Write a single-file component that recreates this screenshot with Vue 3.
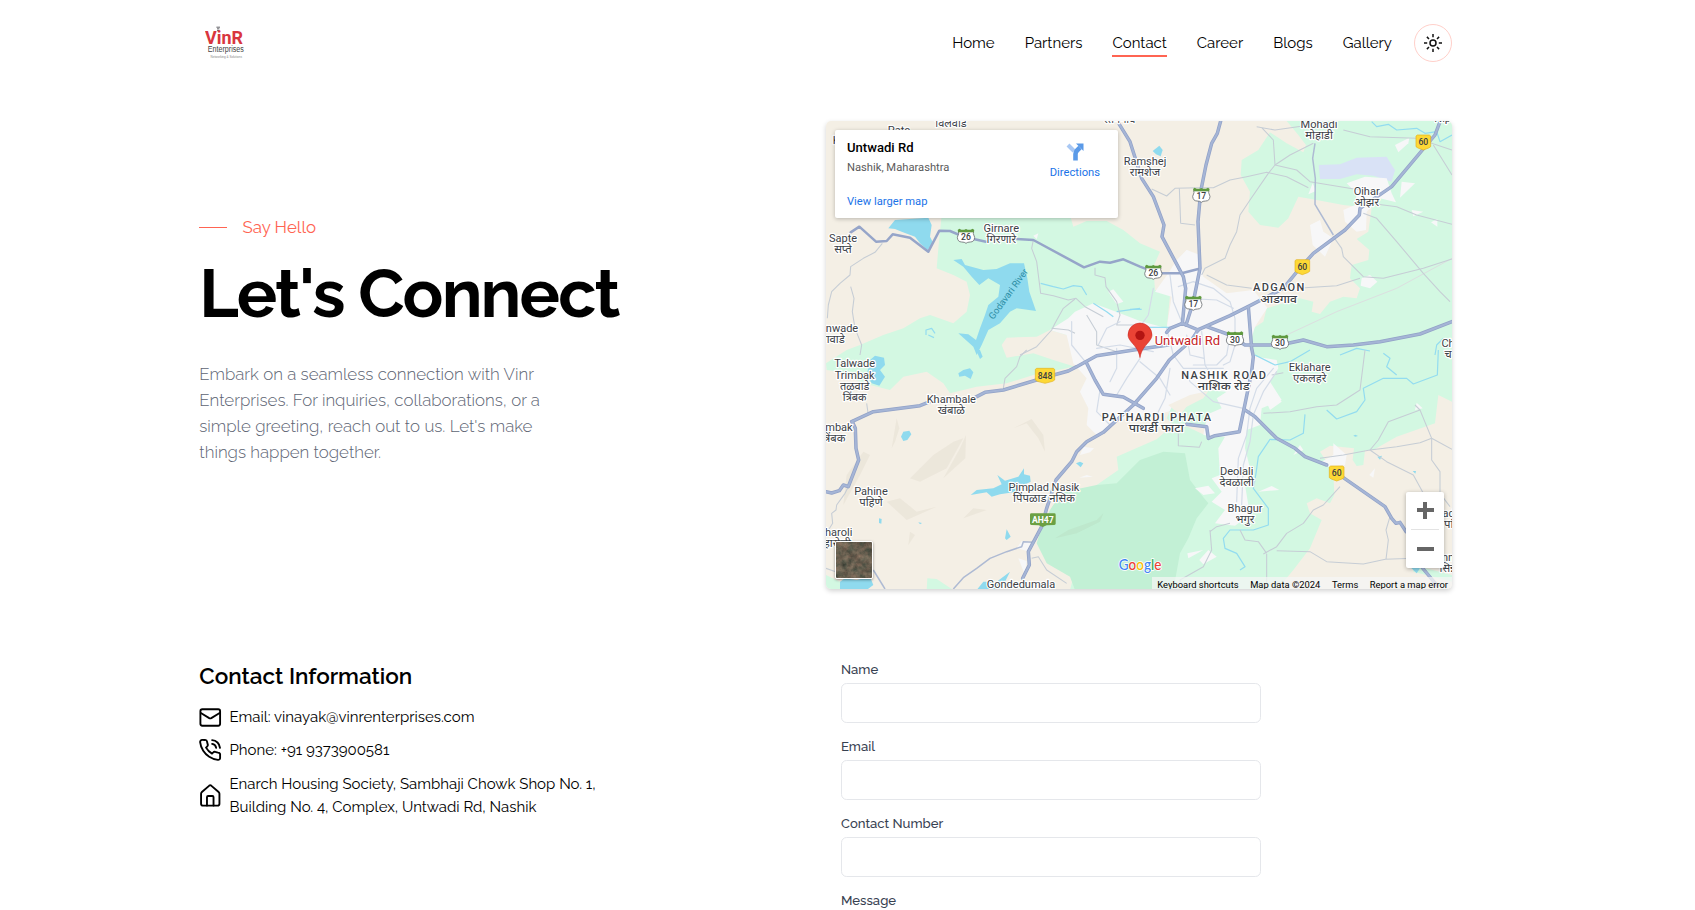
<script setup>
const nav = [
  { text: 'Home' },
  { text: 'Partners' },
  { text: 'Contact', active: true },
  { text: 'Career' },
  { text: 'Blogs' },
  { text: 'Gallery' },
]
const fields = ['Name', 'Email', 'Contact Number']

// Map coordinates are in thirds of a CSS pixel; east tiles are shifted by 930, south tiles by 705.
const tiles = [
  {
    name: 'nw', dx: 0, dy: 0,
    minor: [
      'M187 385 L165 412 L130 430 L92 455 L90 480 L60 505 L35 530 L25 570 L22 610 M92 515 L102 550 L97 590 L105 640 L125 690 L120 720',
      'M640 375 L635 400 L650 440 L655 480 L662 535 L700 542 L745 555 L768 550 L795 575 L850 605',
      'M765 552 L730 580 L705 625 L695 645 L650 695 L600 720 M825 458 L825 480 L855 488 L858 515 L890 560 L900 600 L890 630 L960 630',
      'M695 640 L745 645 L765 655 M800 600 L830 650 L830 690 L890 710',
    ],
    streams: ['M662 505 L700 515 L730 522 L760 512 L785 515 L800 540', 'M820 565 L860 590 L880 605 M890 590 L960 580', 'M318 660 L318 645 L335 640 L345 655 M325 660 L342 668'],
  },
  {
    name: 'ne', dx: 930, dy: 0,
    minor: [
      'M380 35 L435 45 L540 30 M395 38 L430 75 L435 150 L415 175 L360 255 L330 300 L320 350 L300 390 L285 430 L225 460 L215 480',
      'M435 150 L480 120 L550 85 M435 150 L500 165 L540 200 L690 225 M65 222 L110 243 L135 220 L205 218 L250 218 L300 195 L350 185 L410 172 L470 185 L535 218',
      'M148 220 L152 325 L195 330 M720 265 L800 275 L860 300 L966 328',
      'M700 295 L740 310 L800 380 L880 475 L930 530 L960 560 M610 365 L635 400 L640 425 L700 485 L760 490 L880 460 L966 432',
      'M230 480 L290 510 L365 520 M500 520 L620 512 L690 490 M640 45 L720 65 L860 70 L966 105 M910 90 L966 180',
    ],
    medium: ['M555 85 L548 130 L556 190 L555 268 L610 360'],
    rail: ['M470 660 L620 590 L800 520 L966 430'],
    streams: ['M725 20 L740 35 L775 28 L800 45 L860 40 L885 55 L920 50 L930 80 L966 60', 'M0 583 L35 583', 'M55 637 L120 637', 'M630 720 L680 700 L720 708 M915 720 L920 690 L940 670'],
  },
  {
    name: 'sw', dx: 0, dy: 705,
    minor: [
      'M85 410 L75 430 L50 465 L48 480 L35 490 L38 520 L22 545',
      'M18 655 L60 670 M550 115 L555 85 L590 50 L600 20 L620 0 M635 625 L655 620 L680 660 L740 700 M140 160 L145 195',
    ],
    medium: ['M400 717 L430 683 L470 655 L510 625 L560 605 L605 590 L610 575 L640 577', 'M160 660 L195 717'],
    streams: [],
  },
  {
    name: 'se', dx: 930, dy: 705,
    minor: [
      'M400 190 L480 185 L560 170 L620 165 L690 120 L705 0 M720 300 L745 270 L775 215 L870 180 L855 165 M870 180 L905 265 L966 298 M905 265 L905 330 L930 365 L930 430 L960 470',
      'M570 325 L640 315 L720 300 L800 290 L870 278 L905 265 M720 300 L770 335 L850 375 L880 430 M630 410 L580 465 L550 480 L520 520 L470 550 L440 590 L400 612',
      'M440 602 L540 605 L590 635 L700 642 L766 628 L850 625 M780 500 L768 540 L775 570 L768 628 M410 612 L410 720 M240 540 L245 600 L220 650 L150 690 L150 720',
      'M300 520 L260 530 L240 545 M330 540 L345 570 L385 575 L410 610 M145 250 L145 287 L208 292 L215 275 M425 75 L460 68',
    ],
    streams: ['M375 15 L435 45 L480 35 L540 0', 'M590 180 L620 207 L680 185 L705 150 L700 115 L760 85 L830 85 L850 102 L922 75 L925 0 M760 10 L780 25 L770 50 L800 75', 'M525 193 L520 250 L480 270 L420 268 L385 320 L378 370 L370 415 L415 475 L415 525 L370 540 L300 540 L280 565 L285 595 L320 610 L345 650 L330 660'],
  },
]

const stateRoad = 'M92 352 L118 335 L168 380 L200 378 L218 358 L270 368 L325 410 L358 347 L390 348 L430 365 L498 380 M590 372 L640 375 L792 457 L840 440 L870 443 L910 433 L960 455 L1000 470 M1018 475 L1085 475 L1135 462'

const highways = [
  'M898 28 L930 80 L965 190 L1000 245 L1032 330 L1026 365 L1090 485 L1097 520 L1087 628',
  'M1202 18 L1192 55 L1175 85 L1158 150 L1142 230 L1134 320 L1140 460 L1120 560 L1098 630',
  'M95 920 L160 890 L300 872 L330 860 M460 850 L495 832 L550 825 L690 783 L745 768 L770 755 L830 722 L960 702 L1045 690',
  'M97 920 L106 940 L108 1000 L116 1035 L85 1115 L70 1110 L58 1127 L35 1134 L18 1130',
  'M1860 20 L1845 60 L1715 215 L1620 280 L1618 300 L1575 345 L1480 415 L1435 465 L1390 520 L1290 572 L1230 602 L1135 644',
  'M1135 644 L1115 675 L1048 735 L1010 790 L940 870 L850 952 L800 980 L770 1010 L755 1040 L708 1095 L680 1180 L665 1235 L625 1310 L628 1350 L608 1390',
  'M1285 575 L1295 700 L1300 725 L1295 770 L1258 950 L1185 962 L1165 970 L1160 935 L1100 928 M800 745 L825 795 L850 838 L910 846 L970 880',
  'M1275 885 L1305 905 L1370 970 L1425 1000 L1455 1025 L1520 1050 M1570 1088 L1695 1175 L1715 1210 L1728 1225 L1740 1222 L1758 1250 M1800 1350 L1850 1410',
  'M1040 652 L1050 640 L1087 625 L1135 645 M1160 635 L1230 660 L1275 690 L1380 690 L1450 675 L1520 695 L1600 690 L1680 680 L1800 657 L1896 620',
]

const cityStreets = [
  'M1075 515 L1120 500 L1180 520 L1230 560 L1245 610 L1245 680 M1100 550 L1190 555 L1240 580 M755 620 L755 690 L800 745',
  'M1040 640 L1060 720 L1090 760 L1210 760 M900 620 L860 640 L835 690 M960 730 L920 790 L890 840 M960 740 L1020 790 L1050 840',
  'M1145 650 L1155 750 L1185 800 M1100 660 L1110 720 L1152 730 M1230 660 L1220 720 L1190 750 L1120 750',
  'M1050 760 L1035 850 L1000 920 M1245 690 L1230 740 L1210 750 M830 700 L900 690 L1000 710 M840 825 L830 890 L870 930',
  'M1100 770 L1110 800 L1180 860 L1270 880 M1000 520 L985 600 L960 635 M1050 480 L1060 560 L1085 620 M890 700 L890 760 L870 800',
  'M1360 760 L1310 820 L1290 880 L1280 960 L1255 1030 L1250 1160 M1370 770 L1330 830 L1300 900 L1290 980 L1270 1050 L1265 1170',
]

const ponds = [
  'M205 340 L225 315 L325 308 L335 330 L330 365 L340 385 L322 405 L300 385 L285 365 L245 350 L225 342Z',
  'M400 435 L425 432 L435 450 L490 465 L530 462 L570 445 L612 445 L622 490 L628 530 L648 588 L590 580 L570 590 L540 625 L505 645 L485 690 L470 720 L460 695 L415 655 L445 658 L468 675 L480 640 L495 600 L505 570 L535 545 L540 510 L505 490 L478 510 L455 485 L430 455Z',
  'M150 735 L165 722 L192 728 L195 750 L180 765 L195 785 L178 812 L155 805 L140 780Z',
  'M415 775 L430 765 L450 760 L460 772 L452 792 L435 782 L418 785Z', 'M468 705 L480 705 L488 725 L480 732Z',
  'M243 965 L250 950 L268 947 L274 958 L262 975 L250 978Z',
  'M452 1140 L470 1125 L520 1120 L545 1108 L532 1080 L555 1097 L595 1085 L612 1060 L612 1078 L630 1082 L632 1100 L600 1115 L590 1130 L540 1138 L515 1145 L500 1132Z',
  'M768 1045 L780 1040 L790 1045 L782 1057Z', 'M555 1270 L560 1243 L572 1265 L560 1275Z', 'M177 1210 L185 1212 L184 1226 L177 1224Z', 'M295 1222 L306 1224 L300 1228Z',
  'M60 1400 L75 1390 L110 1395 L150 1385 L160 1410 L140 1425 L60 1425Z', 'M470 1425 L490 1400 L530 1400 L570 1370 L555 1400 L520 1425Z',
  'M998 108 L1018 92 L1028 105 L1022 124 L1008 118Z', 'M1770 1355 L1800 1360 L1790 1375Z', 'M1672 1025 L1686 1022 L1680 1034Z', 'M1778 1068 L1788 1068 L1786 1076Z', 'M1600 962 L1606 959 L1614 963 L1606 965Z',
]

const suburbs = [
  'M640 362 L655 355 L650 373Z', 'M865 530 L880 523 L910 560 L890 568Z', 'M1725 90 L1768 68 L1765 85 L1735 112Z',
  'M1580 205 L1635 185 L1700 190 L1715 235 L1728 262 L1680 250 L1640 290 L1638 345 L1610 350 L1575 320 L1570 285 L1605 270 L1610 235Z',
  'M1745 200 L1785 205 L1740 248Z', 'M1470 330 L1500 315 L1510 350 L1540 370 L1515 425 L1478 390Z', 'M1465 238 L1478 205 L1488 228Z',
  'M1775 285 L1810 290 L1780 304Z', 'M1833 322 L1852 312 L1852 335Z', 'M1625 490 L1650 480 L1672 500 L1650 520 L1622 512Z',
  'M1505 1040 L1540 1020 L1540 985 L1580 1020 L1575 1050 L1520 1055Z', 'M1315 1130 L1355 1113 L1378 1125Z', 'M1102 1315 L1150 1305 L1105 1330Z',
  'M1138 1335 L1165 1305 L1190 1325 L1150 1348Z', 'M1420 1020 L1440 990 L1450 1005Z', 'M1785 885 L1790 863 L1808 880Z', 'M1648 1080 L1665 1060 L1660 1088Z',
  'M780 1020 L790 995 L822 1000 L810 1012Z', 'M595 1330 L620 1338 L615 1380Z', 'M590 1300 L605 1278 L640 1282 L630 1310Z', 'M778 1088 L800 1080 L818 1085Z', 'M1080 430 L1100 405 L1130 420 L1140 455 L1100 460Z',
  'M1330 840 L1360 825 L1385 860 L1350 885Z', 'M1125 1120 L1165 1112 L1185 1135 L1150 1140Z',
]

const relief = [
  'M80 1080 L130 1010 L150 1020 L120 1080 L70 1170Z', 'M215 1000 L230 910 L238 940 L225 980Z', 'M270 1090 L340 1020 L400 980 L430 970 L380 1060 L300 1100Z',
  'M420 1000 L438 960 L436 1030 L370 1090Z', 'M580 940 L635 912 L670 960 L675 1010 L655 970 L620 925Z', 'M200 1160 L240 1150 L290 1190 L350 1175 L260 1215Z',
  'M705 1270 L745 1245 L830 1215 L850 1195 L840 1220 L770 1255Z', 'M265 1290 L270 1250 L285 1260Z', 'M430 1210 L460 1180 L500 1185Z',
]

const labels = [
  { cx: 69, y: 381, a: 'Sapte', b: 'सप्ते' },
  { cx: 544, y: 350, a: 'Girnare', b: 'गिरणारे' },
  { cx: 66, y: 651, a: 'nwade', b: 'गवाडे', bx: 42 },
  { cx: 975, y: 150, a: 'Ramshej', b: 'रामशेज' },
  { cx: 1497, y: 40, a: 'Mohadi', b: 'मोहाडी' },
  { cx: 1640, y: 240, a: 'Ojhar', b: 'ओझर' },
  { cx: 394, y: 864, a: 'Khambale', b: 'खंबाळे' },
  { cx: 57, y: 948, a: 'mbak', b: 'त्रिंबक', bx: 40 },
  { cx: 153, y: 1139, a: 'Pahine', b: 'पहिणे' },
  { cx: 56, y: 1263, a: 'haroli', b: 'हारोली', bx: 52 },
  { cx: 672, y: 1128, a: 'Pimplad Nasik', b: 'पिंपळाड नसिक' },
  { cx: 603, y: 1418, a: 'Gondedumala' },
  { cx: 1469, y: 768, a: 'Eklahare', b: 'एकलहरे' },
  { cx: 1250, y: 1080, a: 'Deolali', b: 'देवळाली' },
  { cx: 1275, y: 1190, a: 'Bhagur', b: 'भगुर' },
  { cx: 1884, y: 697, a: 'Ch', b: 'च' },
  { cx: 1886, y: 1206, a: 'ad', b: 'पां' },
  { cx: 1884, y: 1338, a: 'nn', b: 'सिन्न' },
]
const towns = [
  { cx: 1376, y: 529, a: 'ADGAON', b: 'आडगाव', w: 154, bw: 110 },
  { cx: 1211, y: 792, a: 'NASHIK ROAD', b: 'नाशिक रोड', w: 254, bw: 156 },
  { cx: 1009, y: 917, a: 'PATHARDI PHATA', b: 'पाथर्डी फाटा', w: 328, bw: 166 },
]
const stateShields = [
  { x: 438, y: 364, n: 26 }, { x: 1144, y: 241, n: 17 }, { x: 1000, y: 472, n: 26 },
  { x: 1120, y: 565, n: 17 }, { x: 1245, y: 672, n: 30 }, { x: 1380, y: 682, n: 30 },
]
const nationalShields = [
  { x: 1810, y: 82, n: 60, w: 44 }, { x: 1447, y: 456, n: 60, w: 44 }, { x: 1550, y: 1075, n: 60, w: 44 }, { x: 675, y: 782, n: 848, w: 58 },
]
</script>

<template>
  <div class="page">
    <header class="header">
      <svg class="logo" width="46" height="40" viewBox="0 0 46 40">
        <path d="M12 4.400h2.400M11.400 1.200h3.600M12 2.800h2.400" stroke="#55555a" stroke-width=".9" />
        <text class="logo-mark" x="0" y="17.600" font-size="17.500" textLength="38" lengthAdjust="spacingAndGlyphs">VinR</text>
        <text class="logo-sub" x="2.800" y="26" font-size="8.300" textLength="36" lengthAdjust="spacingAndGlyphs">Enterprises</text>
        <text class="logo-tag" x="5.500" y="32.200" font-size="3.600" textLength="31.500" lengthAdjust="spacingAndGlyphs">Networking &amp; Solutions</text>
      </svg>
      <nav class="nav">
        <a v-for="n in nav" :key="n.text" :class="{ active: n.active }">{{ n.text }}</a>
        <button class="theme" aria-label="Theme">
          <svg width="20" height="20" viewBox="0 0 20 20" fill="none" stroke="#111" stroke-width="1.500">
            <circle cx="10" cy="10" r="3" />
            <path d="M10 1v3.200M10 15.800V19M1 10h3.200M15.800 10H19M3.900 3.900l2.100 2.100M14 14l2.100 2.100M3.900 16.100L6 14M14 6l2.100-2.100" />
          </svg>
        </button>
      </nav>
    </header>

    <section class="hero">
      <div class="intro">
        <p class="eyebrow"><span class="dash"></span>Say Hello</p>
        <h1>Let's Connect</h1>
        <p class="lead">Embark on a seamless connection with Vinr<br />Enterprises. For inquiries, collaborations, or a<br />simple greeting, reach out to us. Let's make<br />things happen together.</p>
      </div>

      <div class="map">
        <svg class="canvas" width="626" height="468" viewBox="18 18 1878 1404">
          <rect x="18" y="18" width="1878" height="1407" fill="#f4efe5" />
          <g fill="#d3f8e2">
            <path d="M365 300 L750 300 760 335 800 318 860 318 910 345 960 385 1020 410 1000 455 1005 525 1050 540 1040 645 1000 700 740 760 700 768 640 780 560 805 470 815 390 835 370 805 320 770 250 785 210 825 130 805 60 770 20 765 18 745 80 705 120 690 190 660 250 640 300 610 330 600 400 625 440 590 450 540 440 500 400 480 350 460 355 400Z" />
            <path d="M1400 18 L1435 60 1458 90 1450 112 1400 85 1350 52 1315 105 1265 135 1262 180 1290 230 1285 290 1320 330 1375 338 1405 310 1435 245 1490 255 1570 270 1655 280 1645 350 1610 372 1648 405 1645 435 1595 450 1590 490 1620 520 1610 550 1570 545 1530 560 1500 597 1475 590 1480 560 1440 550 1340 580 1330 620 1300 640 1275 805 1260 950 1165 965 1070 920 1010 973 890 1025 895 1065 830 1110 750 1425 1370 1425 1420 1365 1470 1300 1505 1215 1470 1195 1460 1165 1490 1150 1530 1165 1543 1140 1540 1070 1500 1010 1530 992 1602 1000 1598 1035 1610 1053 1630 1050 1635 1005 1660 1005 1730 965 1845 925 1855 840 1896 860 1896 18Z" />
            <path d="M320 1425 L322 1390 350 1392 400 1425Z M18 1380 L60 1400 60 1425 18 1425Z" />
            <path d="M1780 1350 L1896 1380 1896 1400 1780 1370Z" />
          </g>
          <path fill="#f4efe5" d="M545 690 L560 668 650 665 690 645 740 660 780 720 765 755 700 735 640 715 560 728Z" />
          <path fill="#c2f0d5" d="M830 1110 L890 1105 960 1035 1030 1010 1095 1015 1110 1095 1140 1135 1165 1165 1130 1210 1105 1270 1080 1315 1060 1425 765 1425 750 1385 680 1345 650 1285 665 1235 690 1185 725 1132Z" />
          <path fill="#d9e2f6" d="M1496 150 L1560 148 1610 128 1700 125 1715 150 1725 165 1715 200 1660 182 1610 178 1560 192 1500 192Z" />
          <path class="urban" d="M745 610 L765 590 820 565 900 595 960 618 1040 640 1055 545 1005 530 1045 475 1070 435 1100 405 1140 420 1150 485 1220 535 1300 525 1342 578 1305 635 1285 700 1310 725 1370 735 1375 760 1350 800 1385 855 1325 880 1320 930 1280 945 1275 1000 1290 1060 1275 1110 1290 1200 1245 1232 1185 1225 1215 1185 1175 1160 1205 1130 1175 1090 1200 1080 1195 1000 1215 965 1150 960 1165 870 1110 850 1060 885 1010 900 930 905 880 925 830 960 800 930 805 880 780 830 800 790 760 745 740 660 690 645Z" />
          <path fill="#d3f8e2" d="M1060 865 L1110 850 1160 825 1220 830 1190 850 1205 880 1170 895 1155 930 1060 930 1040 910Z" />
          <path fill="#f4efe5" d="M1045 870 L1110 840 1165 828 1150 850 1100 875 1080 900Z" />
          <path v-for="d in suburbs" :key="d" class="urban" :d="d" />
          <path v-for="d in relief" :key="d" class="relief" :d="d" />
          <path v-for="d in ponds" :key="d" fill="#8fdaee" :d="d" />
          <g v-for="t in tiles" :key="t.name" :transform="`translate(${t.dx} ${t.dy})`" fill="none" stroke-linejoin="round">
            <path v-for="d in t.streams" :key="d" :d="d" stroke="#93dcf0" stroke-width="3.600" />
            <path v-for="d in t.rail || []" :key="d" :d="d" stroke="#dcdfe0" stroke-width="3" />
            <path v-for="d in t.minor" :key="d" :d="d" stroke="#c6cdd5" stroke-width="3.200" />
            <path v-for="d in t.medium || []" :key="d" :d="d" stroke="#aebad3" stroke-width="4.500" />
          </g>
          <g fill="none" stroke-linejoin="round" stroke-linecap="round">
            <path v-for="d in cityStreets" :key="d" :d="d" stroke="#d4dce8" stroke-width="3.600" />
            <path :d="stateRoad" stroke="#96a5c9" stroke-width="7.500" />
            <path v-for="d in highways" :key="d" :d="d" stroke="#92a2c7" stroke-width="10.500" />
            <path v-for="d in highways" :key="d" :d="d" stroke="#a5b5d6" stroke-width="6" />
          </g>

          <g v-for="s in stateShields" :key="`${s.x}`" :transform="`translate(${s.x} ${s.y})`">
            <path d="M-23 -14 H23 L22 -8 L26 3 Q25 17 13 17 Q4 17 0 21 Q-4 17 -13 17 Q-25 17 -26 3 L-22 -8Z" fill="#fff" stroke="#707579" stroke-width="2.600" />
            <path d="M-25 -19 L-20 -23 L-14 -20 H-5 L0 -22 L5 -20 H14 L20 -23 L25 -19 L23 -12 H-23Z" fill="#5f9a3f" />
            <text class="shield" y="11">{{ s.n }}</text>
          </g>
          <g v-for="s in nationalShields" :key="`${s.x}`" :transform="`translate(${s.x} ${s.y})`">
            <path :d="`M${-s.w / 2} -19 L${-s.w / 2 + 4} -22 H${s.w / 2 - 4} L${s.w / 2} -19 V13 L${s.w / 2 - 6} 17 L0 23 L${-s.w / 2 + 6} 17 L${-s.w / 2} 13Z`" fill="#fdd835" stroke="#e2b21c" stroke-width="2" />
            <text class="shield" y="9">{{ s.n }}</text>
          </g>
          <path d="M630 1199 Q630 1195 634 1195 H703 Q707 1195 707 1199 V1226 Q707 1229 703 1230 L680 1231 L668 1236 L656 1231 L634 1230 Q630 1229 630 1226Z" fill="#6ba043" />
          <text class="shield ah" x="668.500" y="1224">AH47</text>

          <g class="label">
            <text x="237" y="56">Pate</text>
            <text x="58" y="87">Kh</text>
            <text x="393" y="37">विलवाडे</text>
            <text x="898" y="25">रतनगाव</text>
            <text x="1868" y="22">Nip</text>
            <text x="104" y="757">Talwade</text>
            <text x="104" y="791">Trimbak</text>
            <text x="104" y="824">तळवाडे</text>
            <text x="104" y="857">त्रिंबक</text>
            <template v-for="l in labels" :key="l.a">
              <text :x="l.cx" :y="l.y">{{ l.a }}</text>
              <text v-if="l.b" :x="l.bx || l.cx" :y="l.y + 33" class="local">{{ l.b }}</text>
            </template>
          </g>
          <g class="label town">
            <template v-for="l in towns" :key="l.a">
              <text :x="l.cx" :y="l.y" :textLength="l.w">{{ l.a }}</text>
              <text :x="l.cx" :y="l.y + 34" :textLength="l.bw" lengthAdjust="spacingAndGlyphs" class="local">{{ l.b }}</text>
            </template>
          </g>
          <text class="river" transform="translate(520 615) rotate(-54)">Godavari River</text>
          <text class="place" x="1004" y="691" textLength="196">Untwadi Rd</text>
          <path d="M960 728 C956 705 946 695 934 681 C927 672 924 666 924 660 A36 36 0 0 1 996 660 C996 666 993 672 986 681 C974 695 964 705 960 728Z" fill="#ea4335" stroke="#c5221f" stroke-width="1.500" />
          <circle cx="960" cy="661" r="14" fill="#b31412" />
          <text class="google" x="896" y="1366" textLength="128" lengthAdjust="spacingAndGlyphs"><tspan fill="#4285f4">G</tspan><tspan fill="#ea4335">o</tspan><tspan fill="#fbbc04">o</tspan><tspan fill="#4285f4">g</tspan><tspan fill="#34a853">l</tspan><tspan fill="#ea4335">e</tspan></text>
        </svg>

        <div class="card">
          <div class="place-info">
            <strong>Untwadi Rd</strong>
            <span class="address">Nashik, Maharashtra</span>
            <a>View larger map</a>
          </div>
          <div class="directions">
            <svg width="18" height="18" viewBox="0 0 18 18">
              <path d="M2 2l6 6" stroke="#a9c8f4" stroke-width="4" />
              <path d="M9.500 17.500V11q0-2 1.500-3.500L14 4.500" fill="none" stroke="#5a9ae8" stroke-width="4.600" />
              <path d="M10 .5H17.500V8Z" fill="#5a9ae8" />
            </svg>
            <a>Directions</a>
          </div>
        </div>

        <div class="satellite">
          <svg width="36" height="36">
            <filter id="terrain" x="0" y="0" width="100%" height="100%" color-interpolation-filters="sRGB">
              <feTurbulence type="fractalNoise" baseFrequency="0.16" numOctaves="4" seed="8" />
              <feColorMatrix values="0.42 0.05 0 0 0.17  0.26 0.12 0 0 0.18  0.22 0.1 0 0 0.15  0 0 0 0 1" />
            </filter>
            <rect width="36" height="36" filter="url(#terrain)" />
          </svg>
        </div>

        <div class="zoom">
          <span class="sign plus"></span>
          <i></i>
          <span class="sign"></span>
        </div>

        <div class="legal"><span>Keyboard shortcuts</span><span>Map data ©2024</span><span>Terms</span><span>Report a map error</span></div>
      </div>
    </section>

    <section class="contact">
      <div class="info">
        <h2>Contact Information</h2>
        <ul>
          <li>
            <svg class="icon" viewBox="0 0 24 24"><rect x="1.500" y="3.500" width="21" height="17.500" rx="2" /><path d="M2 7.500l8.900 5.400q1.100.6 2.200 0L22 7.500" /></svg>
            <span>Email: vinayak@vinrenterprises.com</span>
          </li>
          <li class="phone">
            <svg class="icon" viewBox="0 0 24 24"><path d="M14 5.200a5 5 0 0 1 4.300 4.300M14 1.200a9 9 0 0 1 8.400 8.200" /><path d="M22.500 17v3.200a2.100 2.100 0 0 1-2.300 2.100 21.500 21.500 0 0 1-9.300-3.300 21 21 0 0 1-6.400-6.400A21.500 21.500 0 0 1 1.200 3.300 2.100 2.100 0 0 1 3.300 1H6.500a2.100 2.100 0 0 1 2.100 1.800c.1 1 .4 2 .7 2.900a2.100 2.100 0 0 1-.5 2.200L7.500 9.200a17 17 0 0 0 6.400 6.400l1.300-1.300a2.100 2.100 0 0 1 2.300-.5c.9.3 1.900.6 2.900.7a2.100 2.100 0 0 1 2.100 2.500z" /></svg>
            <span>Phone: +91 9373900581</span>
          </li>
          <li>
            <svg class="icon" viewBox="0 0 24 24"><path d="M2.200 10.500q0-1.200.9-2L11 1.700q1-.8 2 0l7.900 6.800q.9.800.9 2V21q0 2-2 2H4.200q-2 0-2-2z" /><path d="M8.500 23v-9q0-1.200 1.200-1.200h4.600q1.200 0 1.200 1.200v9" /></svg>
            <span>Enarch Housing Society, Sambhaji Chowk Shop No. 1,<br />Building No. 4, Complex, Untwadi Rd, Nashik</span>
          </li>
        </ul>
      </div>
      <form class="form">
        <label v-for="f in fields" :key="f">{{ f }}<input type="text" /></label>
        <label>Message<textarea></textarea></label>
      </form>
    </section>
  </div>
</template>

<style>
html, body { margin: 0; background: #fff; }
</style>

<style scoped>
* { box-sizing: border-box; }
.page { height: 910px; overflow: hidden; padding: 0 243px 0 199.300px; background: #fff; color: #000; font-family: Raleway, Lato, sans-serif; font-size: 15px; line-height: 22.500px; }
.header { height: 87px; display: flex; justify-content: space-between; align-items: center; }
.logo { margin-left: 5.700px; margin-top: 4px; }
.logo-mark { font-family: Roboto, sans-serif; font-weight: 700; fill: #d9363e; }
.logo-sub { font-family: "Liberation Sans", sans-serif; fill: #444; }
.logo-tag { font-family: "Liberation Sans", sans-serif; fill: #888; }
.nav { display: flex; align-items: center; gap: 30px; }
.nav a { height: 26px; margin-top: 1px; padding-top: 1px; border-bottom: 2px solid transparent; color: #000; }
.nav a.active { border-color: #ff6452; }
.theme { width: 38px; height: 38px; margin: 0 0 1px -8px; padding: 0; display: grid; place-items: center; border: 1px solid #ffd0ca; border-radius: 50%; background: #fff; }
.hero { display: flex; justify-content: space-between; padding-top: 34px; }
.intro { padding-top: 93px; }
.intro p, .intro h1, .info h2 { margin: 0; }
.eyebrow { display: flex; align-items: center; gap: 15.200px; color: #ff6452; font-size: 16.875px; line-height: 26.250px; }
.dash { width: 28px; height: 1px; background: #ff6452; }
.intro h1 { margin-top: 20px; font-size: 67.500px; line-height: 67.500px; font-weight: 700; letter-spacing: -0.027em; white-space: nowrap; }
.lead { padding-top: 33px; color: #5d6473; font-size: 16.875px; line-height: 26.100px; font-weight: 300; white-space: nowrap; }
.map { position: relative; width: 626px; height: 468px; overflow: hidden; border-radius: 5px; font-family: Roboto, "Noto Sans", sans-serif; }
.hero .map { box-shadow: 0 2px 5px rgba(0, 0, 0, .18); }
.canvas { display: block; }
.urban { fill: #f7f7f8; }
.relief { fill: #8d8468; opacity: .07; }
.label text { font-family: Roboto, "Noto Sans Devanagari", sans-serif; font-size: 33px; fill: #3c4146; stroke: #fff; stroke-width: 7px; paint-order: stroke; stroke-linejoin: round; text-anchor: middle; }
.label .local { font-size: 34px; }
.town text { font-weight: 500; }
.shield { font-family: Roboto, sans-serif; font-size: 26px; font-weight: 500; fill: #3c4043; text-anchor: middle; }
.ah { fill: #fff; font-weight: 700; }
.river { font-family: Roboto, sans-serif; font-size: 28px; fill: #2e8fa6; }
.place { font-family: Roboto, sans-serif; font-size: 39px; fill: #c5221f; stroke: #fff; stroke-width: 7px; paint-order: stroke; }
.google { font-family: Lato, sans-serif; font-size: 46px; font-weight: 500; stroke: #fff; stroke-width: 5px; paint-order: stroke; }
.card { position: absolute; left: 9px; top: 9px; width: 283px; height: 88px; padding: 9px 18px 9px 12px; display: flex; justify-content: space-between; background: #fff; border-radius: 2px; box-shadow: 0 1px 4px rgba(0, 0, 0, .25); }
.card a { color: #1a73e8; font-size: 11.200px; line-height: 14px; }
.place-info { display: flex; flex-direction: column; }
.place-info strong { font-size: 13.100px; line-height: 18px; font-weight: 500; }
.address { margin-top: 3px; color: #5b5b5b; font-size: 11.200px; line-height: 15px; }
.place-info a { margin-top: 20px; }
.directions { display: flex; flex-direction: column; align-items: center; padding-top: 4px; }
.directions a { margin-top: 5px; }
.satellite { position: absolute; left: 9px; bottom: 10px; width: 38px; height: 38px; border: 1px solid #fff; border-radius: 2px; overflow: hidden; box-shadow: 0 1px 3px rgba(0, 0, 0, .4); }
.satellite svg { display: block; }
.zoom { position: absolute; left: 580px; top: 371px; width: 38px; height: 76px; display: flex; flex-direction: column; align-items: center; background: #fff; border-radius: 2px; box-shadow: 0 1px 4px rgba(0, 0, 0, .3); }
.zoom i { width: 28px; height: 1px; background: #e3e3e3; }
.sign { flex: 1; width: 17px; background: linear-gradient(#666, #666) center / 17px 4px no-repeat; }
.plus { margin-top: -1px; background: linear-gradient(#666, #666) center / 17px 4px no-repeat, linear-gradient(#666, #666) center / 4px 17px no-repeat; }
.legal { position: absolute; right: 0; bottom: 0; height: 12px; display: flex; gap: 11.500px; padding: 0 4px 0 5px; background: rgba(245, 245, 245, .72); color: #000; font-size: 9.400px; line-height: 15px; white-space: nowrap; }
.contact { display: flex; padding-top: 71px; }
.info { width: 641.700px; flex: none; }
.info h2 { padding-top: 1px; font-size: 22.500px; line-height: 30px; font-weight: 600; }
.info ul { list-style: none; margin: 15px 0 0; padding: 0; display: flex; flex-direction: column; gap: 11px; }
.info li { display: flex; align-items: center; gap: 7.700px; }
.info .phone { margin: -1px 0 1px; }
.icon { width: 22.500px; height: 22.500px; fill: none; stroke: #000; stroke-width: 2; stroke-linecap: round; stroke-linejoin: round; }
.form { width: 420px; display: flex; flex-direction: column; gap: 14px; }
.form label { display: flex; flex-direction: column; gap: 4px; color: #374151; font-size: 13.125px; line-height: 19px; font-weight: 500; }
.form input { width: 420px; height: 40px; border: 1px solid #e5e7eb; border-radius: 5.600px; background: #fff; }
.form textarea { height: 90px; border: 1px solid #e5e7eb; border-radius: 5.600px; resize: none; }
</style>
